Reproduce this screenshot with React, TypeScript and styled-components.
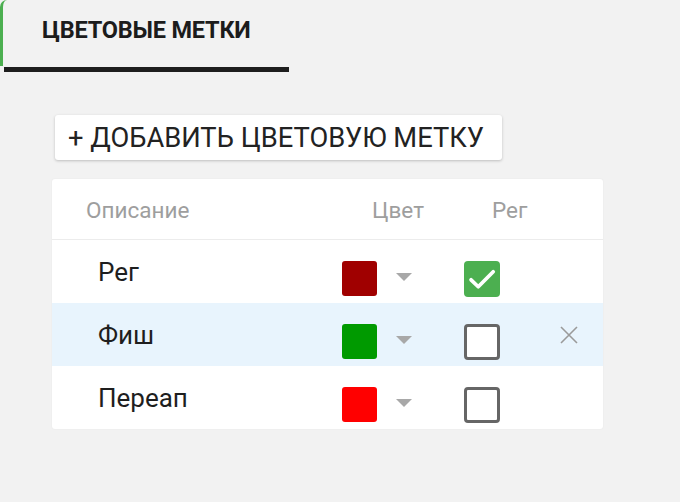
import React from "react";
import styled, { createGlobalStyle } from "styled-components";

const Global = createGlobalStyle`
  html, body { margin: 0; padding: 0; background: #f2f2f2; }
  body { font-family: Roboto, "Noto Sans", "Liberation Sans", sans-serif; width: 680px; height: 502px; overflow: hidden; }
`;

const Page = styled.div`
  display: flex;
  flex-direction: column;
  width: 680px;
  height: 502px;
`;

const TabStrip = styled.div`
  display: flex;
  align-items: flex-start;
  height: 66px;
  border-left: 3px solid #4caf50;
  border-top-left-radius: 7px;
  box-sizing: border-box;
`;

const TabLabel = styled.div`
  padding: 16px 0 0 39px;
  font-size: 23.5px;
  font-weight: 700;
  color: #1c1c1c;
  letter-spacing: -0.2px;
`;

const Indicator = styled.div`
  margin: 1px 0 0 4px;
  width: 285px;
  height: 5px;
  background: #1e1e1e;
`;

const Content = styled.div`
  display: flex;
  flex-direction: column;
  align-items: flex-start;
  padding: 43px 0 0 52px;
`;

const AddButton = styled.button`
  margin-left: 3px;
  height: 45px;
  width: 447px;
  padding: 0 0 0 13px;
  text-align: left;
  background: #fff;
  border: none;
  border-radius: 3px;
  box-shadow: 0 1px 3px rgba(0, 0, 0, 0.22);
  font-family: Roboto, "Liberation Sans", sans-serif;
  font-size: 27.3px;
  color: #222;
  cursor: pointer;
  white-space: nowrap;
`;

const Card = styled.div`
  margin-top: 19px;
  width: 551px;
  background: #fff;
  border-radius: 3px;
  box-shadow: 0 0 2px rgba(0, 0, 0, 0.06);
  display: flex;
  flex-direction: column;
`;

const HeaderRow = styled.div`
  display: flex;
  align-items: center;
  height: 61px;
  padding-top: 2px;
  box-sizing: border-box;
  border-bottom: 1px solid #ececec;
  color: #9e9e9e;
  font-size: 22.5px;
`;

const Row = styled.div<{ $hl?: boolean }>`
  display: flex;
  align-items: center;
  height: 63px;
  background: ${(p) => (p.$hl ? "#e8f4fd" : "transparent")};
  color: #1e1e1e;
  font-size: 26px;
`;

const DescCell = styled.div<{ $pad: number }>`
  width: 290px;
  box-sizing: border-box;
  padding-left: ${(p) => p.$pad}px;
`;

const ColorCell = styled.div<{ $pad?: number; $drop?: number }>`
  width: 122px;
  box-sizing: border-box;
  padding-left: ${(p) => p.$pad ?? 0}px;
  margin-top: ${(p) => p.$drop ?? 0}px;
  display: flex;
  align-items: center;
  gap: 19px;
`;

const CheckCell = styled.div<{ $pad?: number; $drop?: number }>`
  width: 81px;
  box-sizing: border-box;
  padding-left: ${(p) => p.$pad ?? 0}px;
  margin-top: ${(p) => p.$drop ?? 0}px;
  display: flex;
  align-items: center;
`;

const DeleteCell = styled.div`
  flex: 1;
  display: flex;
  align-items: center;
  padding-left: 14px;
`;

const Swatch = styled.div<{ $c: string }>`
  width: 35px;
  height: 35px;
  border-radius: 3px;
  background: ${(p) => p.$c};
`;

const Caret = styled.div`
  width: 0;
  height: 0;
  border-left: 8px solid transparent;
  border-right: 8px solid transparent;
  border-top: 8px solid #a8a8a8;
  margin-top: -3px;
`;

const Box = styled.div<{ $on?: boolean }>`
  width: 36px;
  height: 36px;
  box-sizing: border-box;
  border-radius: 4px;
  border: ${(p) => (p.$on ? "none" : "3px solid #666")};
  background: ${(p) => (p.$on ? "#4caf50" : "#fff")};
  display: flex;
  align-items: center;
  justify-content: center;
`;

const rows = [
  { name: "Рег", color: "#a00000", on: true, hl: false },
  { name: "Фиш", color: "#009a00", on: false, hl: true },
  { name: "Переап", color: "#ff0000", on: false, hl: false },
];

export default function App() {
  return (
    <Page>
      <Global />
      <TabStrip>
        <TabLabel>ЦВЕТОВЫЕ МЕТКИ</TabLabel>
      </TabStrip>
      <Indicator />
      <Content>
        <AddButton>+ ДОБАВИТЬ ЦВЕТОВУЮ МЕТКУ</AddButton>
        <Card>
          <HeaderRow>
            <DescCell $pad={34}>Описание</DescCell>
            <ColorCell $pad={30}>Цвет</ColorCell>
            <CheckCell $pad={28}>Рег</CheckCell>
          </HeaderRow>
          {rows.map((r) => (
            <Row key={r.name} $hl={r.hl}>
              <DescCell $pad={46}>{r.name}</DescCell>
              <ColorCell $drop={14}>
                <Swatch $c={r.color} />
                <Caret />
              </ColorCell>
              <CheckCell $drop={14}>
                <Box $on={r.on}>
                  {r.on && (
                    <svg width="32" height="32" viewBox="0 0 24 24">
                      <path d="M3.8 12.6l5.4 5.2L20.4 6.6" fill="none" stroke="#fff" strokeWidth="2.8" strokeLinecap="round" strokeLinejoin="round" />
                    </svg>
                  )}
                </Box>
              </CheckCell>
              <DeleteCell>
                {r.hl && (
                  <svg width="20" height="20" viewBox="0 0 20 20">
                    <path d="M2 2L18 18M18 2L2 18" stroke="#9a9a9a" strokeWidth="1.6" />
                  </svg>
                )}
              </DeleteCell>
            </Row>
          ))}
        </Card>
      </Content>
    </Page>
  );
}
